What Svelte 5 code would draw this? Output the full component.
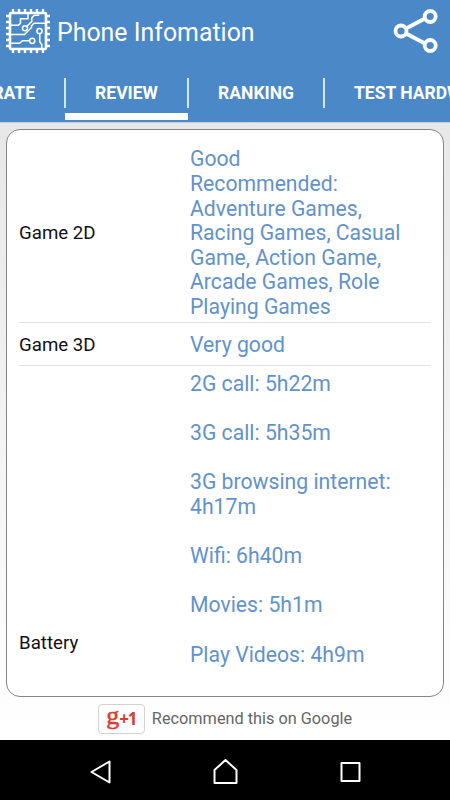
<script>
  let active = 'REVIEW';
  const tabs = ['RATE', 'REVIEW', 'RANKING', 'TEST HARDWARE'];

  const rows = [
    {
      id: 'game2d',
      label: 'Game 2D',
      lines: ['Good', 'Recommended: Adventure Games, Racing Games, Casual Game, Action Game, Arcade Games, Role Playing Games']
    },
    { id: 'game3d', label: 'Game 3D', lines: ['Very good'] },
    {
      id: 'battery',
      label: 'Battery',
      lines: ['2G call: 5h22m', '', '3G call: 5h35m', '', '3G browsing internet: 4h17m', '', 'Wifi: 6h40m', '', 'Movies: 5h1m', '', 'Play Videos: 4h9m']
    }
  ];

  // chip pins, spaced evenly along each side
  const pins = [13, 19, 25, 31, 37, 43];
</script>

<div class="screen">
  <header>
    <div class="bar">
      <svg class="chip" width="56" height="62" viewBox="0 0 56 62">
        <g fill="none" stroke="#fff" stroke-width="2.4">
          {#each pins as p}
            <path d="M{p} 9v4M{p} 49v4M6 {p + 3}h4M46 {p + 3}h4" />
          {/each}
          <rect x="10" y="13" width="36" height="36" rx="1" stroke-width="2.6" />
        </g>
        <g fill="none" stroke="#fff" stroke-width="1.5">
          <path d="M11 25.200h7.500l2-2v-4.500h7.500v-5" />
          <path d="M27 26.200l4.800-4.800v-3.500l2.500-2.700h5" />
          <path d="M11 34.500h13.500l7-7v-1.800l2.500-2.500h11" />
          <path d="M11 43.300h8.500l3-2.600h6.500" />
          <path d="M39.800 34v8l2 2.500v4" />
          <circle cx="25" cy="28.200" r="2.500" />
          <circle cx="39.500" cy="31" r="2.600" />
          <circle cx="32.200" cy="40.800" r="2.600" />
        </g>
      </svg>
      <h1>Phone Infomation</h1>
      <svg class="share" width="70" height="62" viewBox="0 0 70 62">
        <g fill="none" stroke="#fff" stroke-width="3.800">
          <path d="M26 28.500l19-10M26 33.500l19 10" />
          <circle cx="21" cy="31" r="5.500" />
          <circle cx="50.200" cy="16.500" r="5.500" />
          <circle cx="50.200" cy="45.500" r="5.500" />
        </g>
      </svg>
    </div>
    <nav>
      {#each tabs as tab}
        <button class:active={tab === active} on:click={() => (active = tab)}><span>{tab}</span></button>
      {/each}
    </nav>
  </header>

  <main>
    <div class="card">
      {#each rows as row}
        <div class="row {row.id}">
          <div class="label">{row.label}</div>
          <div class="value">
            {#each row.lines as line}
              <p>{line}</p>
            {/each}
          </div>
        </div>
      {/each}
    </div>
    <div class="plus">
      <button class="plus-button"><span class="g">g</span><span class="one">+1</span></button>
      <span class="recommend">Recommend this on Google</span>
    </div>
  </main>

  <footer>
    <svg width="125" height="60" viewBox="0 0 125 60"><path d="M53.500 32L71.500 21.500v21z" /></svg>
    <svg width="125" height="60" viewBox="0 0 125 60"><path d="M51.500 43V30L62.500 20L73.500 30V43z" /></svg>
    <svg width="125" height="60" viewBox="0 0 125 60"><path d="M53.500 23h18v18h-18z" /></svg>
  </footer>
</div>

<style>
  .screen {
    width: 450px;
    height: 800px;
    display: flex;
    flex-direction: column;
    overflow: hidden;
    font-family: Roboto, sans-serif;
  }
  header {
    flex: none;
    box-sizing: border-box;
    height: 123px;
    border-bottom: 1px solid #b9d0e8;
    background: #4b88c7;
    color: #fff;
  }
  .bar {
    display: flex;
    align-items: center;
    height: 66px;
  }
  .bar svg {
    display: block;
    align-self: flex-start;
  }
  h1 {
    flex: 1;
    margin: 0 0 0 1px;
    font-size: 24.9px;
    font-weight: 400;
    line-height: 66px;
    white-space: nowrap;
  }
  nav {
    display: flex;
    width: 520px;
    height: 56px;
  }
  nav button {
    display: flex;
    flex-direction: column;
    flex: none;
    width: 136px;
    padding: 12px 0 2px;
    border: 0;
    background: none;
    color: #fff;
    font: 700 17.5px/30px Roboto, sans-serif;
    white-space: nowrap;
  }
  nav button span {
    display: block;
    box-sizing: border-box;
    width: 100%;
    border-right: 2px solid #d4e5f5;
    text-align: center;
  }
  nav button:first-child {
    width: 66px;
  }
  nav button:first-child span {
    padding-right: 29px;
    direction: rtl;
    text-align: right;
  }
  nav button:nth-child(2) {
    width: 123px;
  }
  nav button:last-child {
    width: 195px;
  }
  nav button:last-child span {
    border: 0;
    padding-left: 29px;
    text-align: left;
  }
  nav .active::after {
    content: '';
    width: 100%;
    height: 7px;
    margin: 5px 0 0 -1px;
    background: #fff;
  }
  main {
    flex: 1;
    min-height: 0;
    padding: 6px 6px 0;
    background: linear-gradient(#e7e7e8, #fff);
  }
  .card {
    height: 568px;
    box-sizing: border-box;
    overflow: hidden;
    padding: 12px 12px 0;
    border: 1px solid #858585;
    border-radius: 14px;
    background: #fff;
  }
  .row {
    display: grid;
    grid-template-columns: 171px 1fr;
    align-items: center;
    box-sizing: border-box;
    border-bottom: 1px solid #e2e2e2;
    font-size: 21.2px;
    line-height: 24.6px;
  }
  .game2d {
    height: 181px;
    padding-top: 3px;
  }
  .game3d {
    height: 43px;
    padding-top: 3px;
  }
  .battery {
    height: 552px;
    padding-top: 1px;
  }
  .label {
    color: #111;
    font-size: 18.7px;
  }
  .value {
    padding-right: 12px;
    color: #6292cc;
  }
  .battery .value {
    align-self: start;
    padding-top: 5px;
  }
  .battery .label {
    padding-top: 2px;
  }
  p {
    margin: 0;
    min-height: 24.6px;
  }
  .plus {
    display: flex;
    align-items: center;
    justify-content: center;
    height: 43px;
  }
  .plus-button {
    display: flex;
    align-items: center;
    justify-content: center;
    box-sizing: border-box;
    width: 47px;
    height: 30px;
    padding: 0;
    border: 1px solid #d2d2d2;
    border-radius: 4px;
    background: #fff;
    color: #d8402f;
  }
  .g {
    margin-top: -6px;
    font: 400 26px/20px 'Liberation Serif', serif;
    -webkit-text-stroke: 0.5px #d8402f;
  }
  .one {
    font: 700 17px/20px 'Open Sans', sans-serif;
    letter-spacing: -1px;
  }
  .recommend {
    margin-left: 7px;
    color: #666;
    font-size: 16.3px;
  }
  footer {
    flex: none;
    display: flex;
    justify-content: center;
    height: 60px;
    background: #000;
  }
  footer path {
    fill: none;
    stroke: #fff;
    stroke-width: 2;
    stroke-linejoin: round;
  }
</style>
